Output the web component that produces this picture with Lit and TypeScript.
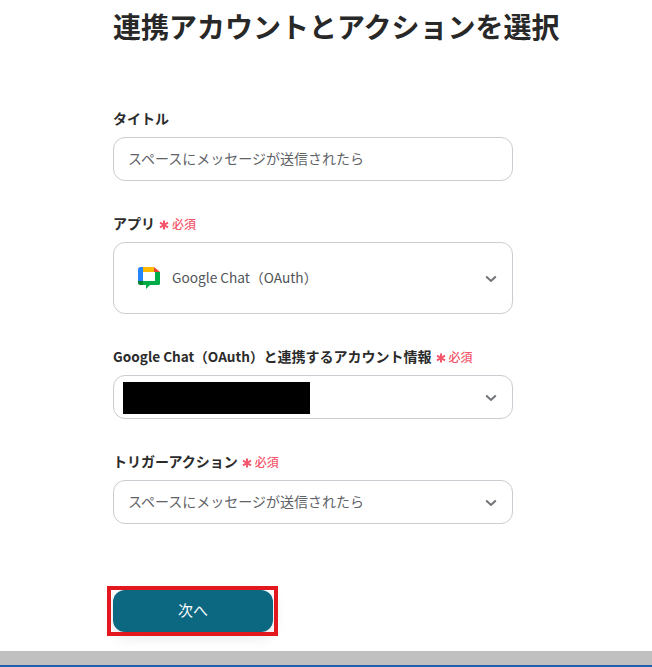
import { LitElement, html, css } from "lit";
import { customElement } from "lit/decorators.js";

const chevron = html`<svg class="chev" width="12" height="8" viewBox="0 0 12 8"><path d="M1.200 1.500 6 6 10.800 1.500" fill="none" stroke="#6f7275" stroke-width="2"/></svg>`;
const chatIcon = html`<svg width="24" height="24" viewBox="0 0 24 24">
  <path d="M1 7V3.500A2.500 2.500 0 0 1 3.500 1H7V7Z" fill="#2684fc"/>
  <rect x="1" y="7" width="5" height="8" fill="#2684fc"/>
  <path d="M6 1H17V6H6Z" fill="#ffba00"/>
  <path d="M17 1 23 6H17Z" fill="#ea4335"/>
  <path d="M1 15H6V19H3.500A2.500 2.500 0 0 1 1 16.500Z" fill="#00832d"/>
  <path d="M18 6H23V17.500A1.500 1.500 0 0 1 21.500 19H13L9 23V19H6V15H18Z" fill="#00ac47"/>
  <path d="M6 6H18V15H6Z" fill="#fff"/>
</svg>`;

@customElement("app-root")
export class AppRoot extends LitElement {
  static styles = css`
    :host { display: flex; flex-direction: column; height: 667px; overflow: hidden; background: #fff; font-family: "Noto Sans CJK JP", "Noto Sans", sans-serif; color: #2b2b2b; }
    .main { flex: 1; width: 400px; margin-left: 113px; display: flex; flex-direction: column; }
    h1 { margin: 6px 0 0; font-size: 28px; line-height: 40px; font-weight: 700; color: #282828; white-space: nowrap; }
    .field { display: flex; flex-direction: column; }
    .f1 { margin-top: 61px; }
    .f2, .f3, .f4 { margin-top: 31px; }
    .label { box-sizing: border-box; display: flex; align-items: center; height: 24px; padding-bottom: 2px; font-size: 14px; font-weight: 700; color: #2b2b2b; white-space: nowrap; margin-bottom: 6px; }
    .latin { font-size: 13.600px; }
    .req { display: inline-flex; align-items: center; color: #f4566b; font-size: 12px; font-weight: 500; margin-left: 4px; }
    .req svg { margin-right: 3px; margin-top: 3px; }
    .box { box-sizing: border-box; height: 44px; border: 1px solid #c9ccd0; border-radius: 12px; display: flex; align-items: center; justify-content: space-between; padding: 0 15px 0 14px; font-size: 14px; color: #5f6368; background: #fff; }
    .box.tall { height: 72px; padding-left: 23px; }
    .text { margin-bottom: 2px; }
    .chev { margin-top: 1px; }
    .app { display: flex; align-items: center; gap: 11px; font-size: 13.700px; color: #505458; }
    .mask { width: 187px; height: 32px; background: #000; margin-left: -5px; margin-top: 2px; }
    .btnwrap { position: relative; margin-top: 66px; width: 160px; }
    button { display: block; width: 160px; height: 42px; border: 0; padding: 0 0 3px; border-radius: 12px; background: #0c6781; color: #fff; font: 400 15px "Noto Sans CJK JP", sans-serif; box-shadow: 0 4px 14px rgba(40,50,90,.14); }
    .hl { position: absolute; left: -6px; top: -4px; width: 171px; height: 50px; box-sizing: border-box; border: 4px solid #e3171e; pointer-events: none; }
    .scroll { height: 14px; background: #c0c0c0; margin-bottom: 2px; flex: none; position: relative; }
    .line { height: 2px; background: #1f5fae; position: absolute; left: 0; right: 0; top: 14px; }
  `;

  private req() {
    return html`<span class="req"><svg width="10" height="10" viewBox="0 0 10 10"><path d="M5 .5V9.500M1 2.700 9 7.300M9 2.700 1 7.300" stroke="#f4566b" stroke-width="2"/></svg>必須</span>`;
  }

  render() {
    return html`
      <div class="main">
        <h1>連携アカウントとアクションを選択</h1>
        <div class="field f1">
          <div class="label">タイトル</div>
          <div class="box"><span class="text">スペースにメッセージが送信されたら</span></div>
        </div>
        <div class="field f2">
          <div class="label">アプリ${this.req()}</div>
          <div class="box tall"><span class="app">${chatIcon}<span class="text">Google Chat（OAuth）</span></span>${chevron}</div>
        </div>
        <div class="field f3">
          <div class="label"><span class="latin">Google Chat（OAuth）</span>と連携するアカウント情報${this.req()}</div>
          <div class="box"><div class="mask"></div>${chevron}</div>
        </div>
        <div class="field f4">
          <div class="label">トリガーアクション${this.req()}</div>
          <div class="box"><span class="text">スペースにメッセージが送信されたら</span>${chevron}</div>
        </div>
        <div class="btnwrap"><button>次へ</button><div class="hl"></div></div>
      </div>
      <div class="scroll"><div class="line"></div></div>
    `;
  }
}
